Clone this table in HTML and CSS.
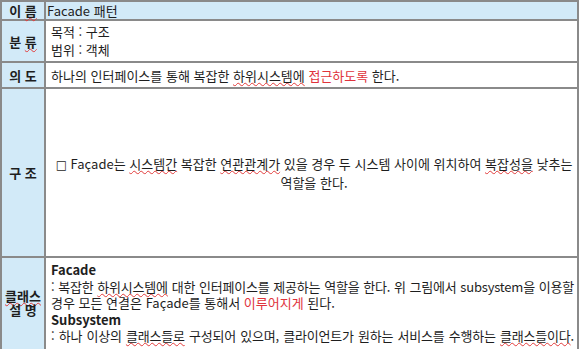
FILE: index.html
```html
<!DOCTYPE html>
<html lang="ko">
<head>
<meta charset="utf-8">
<link rel="stylesheet" href="styles.css">
</head>
<body>
<table class="doc">
  <tr class="r-name">
    <th class="label">이 <span class="sp">름</span></th>
    <td class="val val-name">Facade 패턴</td>
  </tr>
  <tr class="r-kind">
    <th class="label">분 <span class="sp">류</span></th>
    <td class="val kind"><div>목적 : 구조</div><div>범위 : 객체</div></td>
  </tr>
  <tr class="r-intent">
    <th class="label">의 도</th>
    <td class="val">하나의 인터페이스를 통해 복잡한 <span class="sp">하위시스템에</span> <span class="red">접근하도록</span> 한다.</td>
  </tr>
  <tr class="r-struct">
    <th class="label">구 조</th>
    <td class="val center"><div class="line"><span class="box">□</span> Façade는 <span class="sp">시스템간</span> 복잡한 <span class="sp">연관관계가</span> 있을 경우 두 시스템 사이에 위치하여 <span class="sp">복잡성을</span> 낮추는</div><div class="line">역할을 한다.</div></td>
  </tr>
  <tr class="r-class">
    <th class="label label-class"><span class="sp">클래스</span><br>설 명</th>
    <td class="val desc">
      <div class="b">Facade</div>
      <div class="full">: 복잡한 <span class="sp">하위시스템에</span> 대한 인터페이스를 제공하는 역할을 한다. 위 그림에서 subsystem을 이용할</div>
      <div>경우 모든 연결은 Façade를 통해서 <span class="red">이루어지게</span> 된다.</div>
      <div class="b">Subsystem</div>
      <div class="full">: 하나 이상의 <span class="sp">클래스들로</span> 구성되어 있으며, 클라이언트가 원하는 서비스를 수행하는 <span class="sp">클래스들이다</span>.</div>
    </td>
  </tr>
</table>
</body>
</html>
```

FILE: styles.css
```css
html, body {
  margin: 0;
  padding: 0;
  background: #ffffff;
}
body {
  font-family: "Noto Sans CJK KR", "Noto Sans", sans-serif;
  font-size: 13px;
  color: #1e1e1e;
}
.doc {
  border-collapse: collapse;
  width: 579px;
  table-layout: fixed;
}
.doc th, .doc td {
  border: 2px solid #8a8a8a;
  padding: 0;
  vertical-align: middle;
}
.label {
  width: 42px;
  background: #d2eaf8;
  font-weight: bold;
  text-align: center;
  line-height: 17px;
}
.label-class {
  line-height: 14px;
  padding-bottom: 4px !important;
}
.val {
  padding-left: 5px !important;
  line-height: 17px;
  white-space: nowrap;
  overflow: hidden;
}
.kind {
  line-height: 18px;
}
.r-name td, .r-name th {
  background: #d2eaf8;
  height: 17px;
}
.val-name {
  padding-left: 1px !important;
}
.r-kind td { height: 40px; }
.r-intent td { height: 24px; }
.r-struct td { height: 167px; }
.r-class td { height: 90px; vertical-align: top; }
.r-class th { vertical-align: middle; }
.center { text-align: center; }
.box {
  font-family: "DejaVu Sans", sans-serif;
  font-weight: bold;
  font-size: 12px;
}
.desc {
  padding-top: 4px !important;
  line-height: 16.5px;
}
.full {
  text-align: justify;
  text-align-last: justify;
  padding-right: 3px;
  letter-spacing: -0.2px;
}
.b { font-weight: bold; }
.red { color: #e0333b; }
.sp {
  text-decoration: underline wavy #e23b3b;
  text-decoration-thickness: 1px;
  text-underline-offset: 1px;
}
```
